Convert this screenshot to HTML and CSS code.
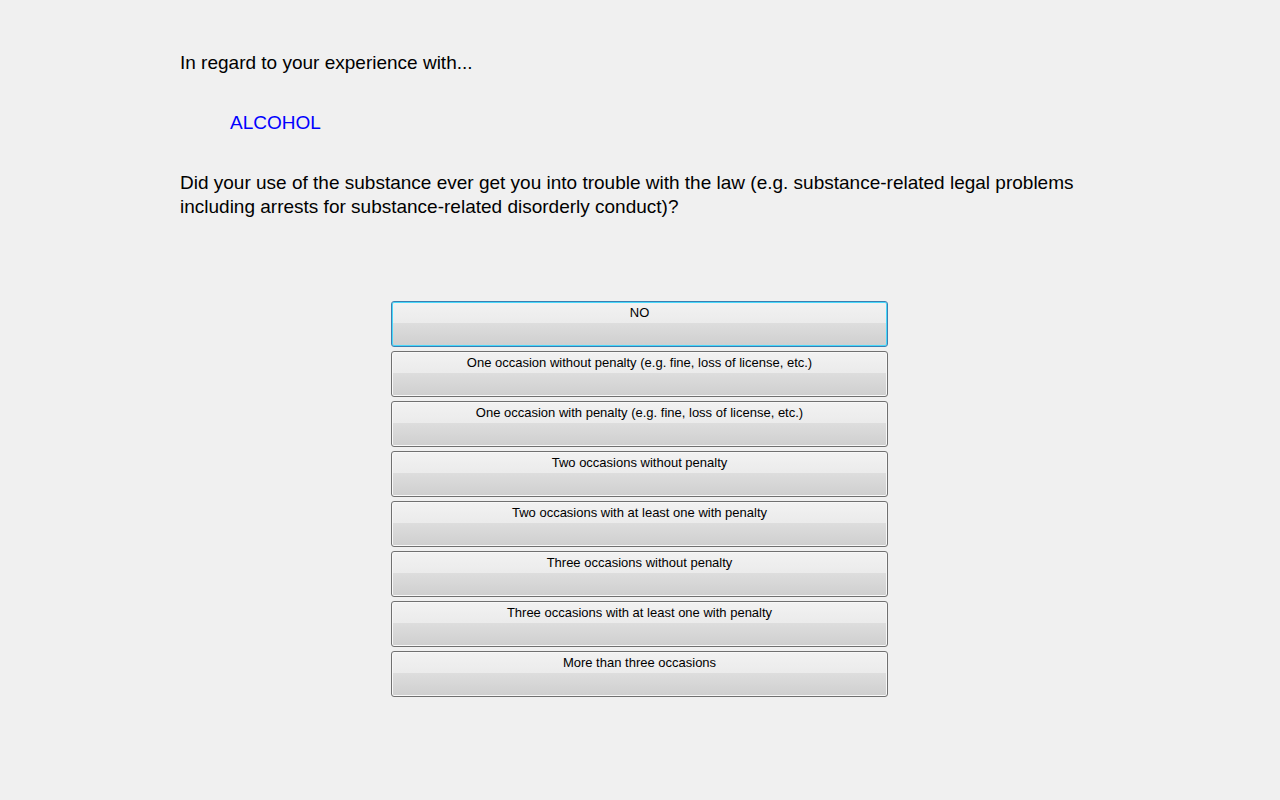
FILE: index.html
```html
<!DOCTYPE html>
<html lang="en">
<head>
<meta charset="utf-8">
<title>Alcohol questionnaire</title>
<link rel="stylesheet" href="styles.css">
</head>
<body>
<main class="page">
  <section class="question">
    <p class="intro">In regard to your experience with...</p>
    <p class="substance">ALCOHOL</p>
    <p class="prompt">Did your use of the substance ever get you into trouble with the law (e.g. substance-related legal problems including arrests for substance-related disorderly conduct)?</p>
  </section>
  <div class="answers">
    <button type="button" class="answer answer-default">NO</button>
    <button type="button" class="answer">One occasion without penalty (e.g. fine, loss of license, etc.)</button>
    <button type="button" class="answer">One occasion with penalty (e.g. fine, loss of license, etc.)</button>
    <button type="button" class="answer">Two occasions without penalty</button>
    <button type="button" class="answer">Two occasions with at least one with penalty</button>
    <button type="button" class="answer">Three occasions without penalty</button>
    <button type="button" class="answer">Three occasions with at least one with penalty</button>
    <button type="button" class="answer">More than three occasions</button>
  </div>
</main>
</body>
</html>
```
FILE: styles.css
```css
* {
  box-sizing: border-box;
}

body {
  margin: 0;
  background: #f0f0f0;
  color: #000;
  font-family: "Liberation Sans", Arial, sans-serif;
}

.page {
  max-width: 920px;
  margin: 0 auto;
  padding: 51px 1px 40px 0;
}

.question {
  font-size: 19px;
  line-height: 24px;
}

.question p {
  margin: 0 0 36px;
}

.question .substance {
  padding-left: 50px;
  color: #0000ff;
}

.question .prompt {
  margin-bottom: 82px;
}

.answers {
  display: flex;
  flex-direction: column;
  gap: 4px;
  max-width: 497px;
  margin: 0 auto;
}

.answer {
  display: flex;
  justify-content: center;
  align-items: flex-start;
  min-height: 46px;
  padding: 3px 8px;
  border: 1px solid #707070;
  border-radius: 3px;
  background: linear-gradient(#f2f2f2 0%, #ebebeb 48%, #dddddd 48%, #cfcfcf 100%);
  box-shadow: inset 0 0 0 1px #f8f8f8;
  color: #000;
  font: 13px/16px "Liberation Sans", Arial, sans-serif;
}

.answer-default {
  border-color: #3c7fb1;
  box-shadow: inset 0 0 0 1px #48d8fb;
}
```
